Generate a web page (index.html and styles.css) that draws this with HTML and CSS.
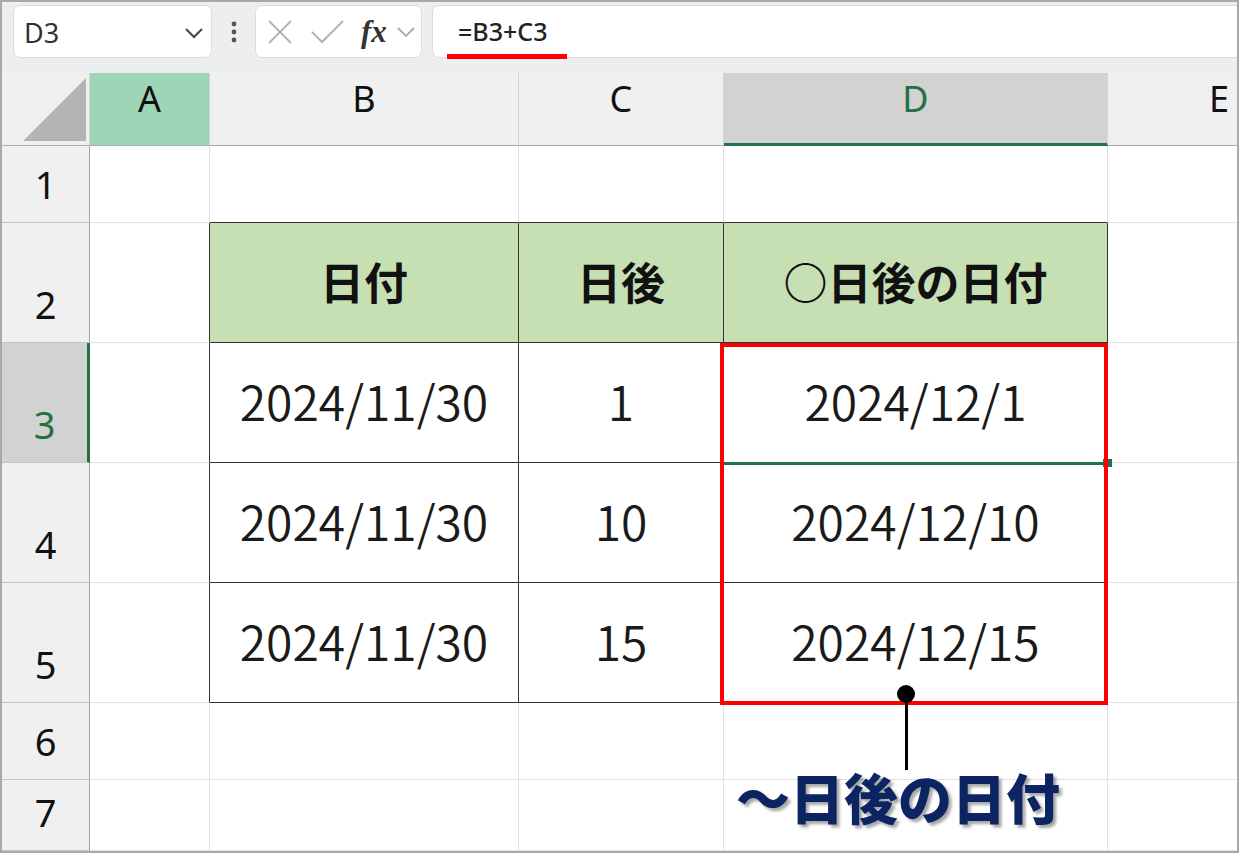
FILE: index.html
```html
<!DOCTYPE html>
<html lang="ja">
<head>
  <meta charset="UTF-8" />
  <meta name="viewport" content="width=device-width, initial-scale=1.0"/>
  <title>日後の日付</title>
  <link rel="stylesheet" href="styles.css">
</head>
<body>

<div class="frame">
  <div class="toolbar">
    <div class="namebox">
      <span class="cellref">D3</span>
      <svg class="chev" width="20" height="12" viewBox="0 0 20 12"><path d="M2 2 L10 10 L18 2" fill="none" stroke="#444" stroke-width="2"/></svg>
    </div>
    <div class="grip">
      <svg width="6" height="22" viewBox="0 0 6 22"><circle cx="3" cy="3" r="2.4" fill="#555"/><circle cx="3" cy="11" r="2.4" fill="#555"/><circle cx="3" cy="19" r="2.4" fill="#555"/></svg>
    </div>
    <div class="fxbox">
      <svg class="ico-x" width="26" height="24" viewBox="0 0 26 24"><path d="M2 1 L24 23 M24 1 L2 23" stroke="#b4b4b4" stroke-width="2"/></svg>
      <svg class="ico-ok" width="33" height="24" viewBox="0 0 33 24"><path d="M1 12 L11 22 L32 1" fill="none" stroke="#b4b4b4" stroke-width="2"/></svg>
      <span class="fx">fx</span>
      <svg class="chev-sm" width="20" height="12" viewBox="0 0 20 12"><path d="M2 2 L10 10 L18 2" fill="none" stroke="#aaa" stroke-width="1.8"/></svg>
    </div>
    <div class="formula">
      <span class="formula-text">=B3+C3</span>
      <span class="mark"></span>
    </div>
  </div>

  <div class="sheet">
    <!-- column headers -->
    <div class="ch corner">
      <svg width="88" height="73" viewBox="0 0 88 73"><polygon points="21,68 84,68 84,5" fill="#b4b4b4"/></svg>
    </div>
    <div class="ch ch-a">A</div>
    <div class="ch">B</div>
    <div class="ch">C</div>
    <div class="ch ch-sel">D</div>
    <div class="ch ch-e">E</div>

    <!-- row 1 -->
    <div class="rh">1</div>
    <div class="c"></div>
    <div class="c above"></div>
    <div class="c above"></div>
    <div class="c above"></div>
    <div class="c"></div>

    <!-- row 2 -->
    <div class="rh">2</div>
    <div class="c before"></div>
    <div class="c tb th">日付</div>
    <div class="c tb th">日後</div>
    <div class="c tb th">○日後の日付</div>
    <div class="c"></div>

    <!-- row 3 -->
    <div class="rh rh-sel">3</div>
    <div class="c before"></div>
    <div class="c tb td">2024/11/30</div>
    <div class="c tb td">1</div>
    <div class="c tb td">2024/12/1</div>
    <div class="c"></div>

    <!-- row 4 -->
    <div class="rh">4</div>
    <div class="c before"></div>
    <div class="c tb td">2024/11/30</div>
    <div class="c tb td">10</div>
    <div class="c tb td">2024/12/10</div>
    <div class="c"></div>

    <!-- row 5 -->
    <div class="rh">5</div>
    <div class="c before"></div>
    <div class="c tb td">2024/11/30</div>
    <div class="c tb td">15</div>
    <div class="c tb td">2024/12/15</div>
    <div class="c"></div>

    <!-- row 6 -->
    <div class="rh">6</div>
    <div class="c"></div>
    <div class="c"></div>
    <div class="c"></div>
    <div class="c"></div>
    <div class="c"></div>

    <!-- row 7 -->
    <div class="rh">7</div>
    <div class="c"></div>
    <div class="c"></div>
    <div class="c"></div>
    <div class="c"></div>
    <div class="c"></div>

    <!-- overlays -->
    <div class="sel-line"></div>
    <div class="sel-handle"></div>
    <div class="red-box"></div>
    <div class="pin-dot"></div>
    <div class="pin-line"></div>
    <div class="callout">～日後の日付</div>
  </div>
</div>

</body>
</html>
```

FILE: styles.css
```css
body {
  margin: 0;
  padding: 0;
  background: #fff;
  font-family: "Noto Sans", "Noto Sans CJK JP", sans-serif;
}

.frame {
  width: 1239px;
  height: 853px;
  box-sizing: border-box;
  border: 2px solid #a9a9a9;
  overflow: hidden;
  background: #fff;
}

/* formula bar */
.toolbar {
  height: 71px;
  background: #edeef0;
  display: flex;
  align-items: flex-start;
  padding-top: 3px;
  box-sizing: border-box;
}

.namebox {
  margin-left: 11px;
  width: 199px;
  height: 53px;
  box-sizing: border-box;
  background: #fff;
  border: 1px solid #dcdcdc;
  border-radius: 7px;
  display: flex;
  align-items: center;
  justify-content: space-between;
  padding: 2px 7px 0 10px;
}

.cellref {
  font-size: 27px;
  color: #333;
  line-height: 1;
}

.grip {
  width: 43px;
  height: 53px;
  display: flex;
  align-items: center;
  justify-content: center;
}

.fxbox {
  width: 167px;
  height: 53px;
  box-sizing: border-box;
  background: #fff;
  border: 1px solid #dcdcdc;
  border-radius: 7px;
  display: flex;
  align-items: center;
  padding-left: 11px;
}

.ico-ok {
  margin-left: 18px;
}

.fx {
  margin-left: 17px;
  font-family: "Liberation Serif", serif;
  font-style: italic;
  font-weight: bold;
  font-size: 31px;
  color: #333;
  line-height: 1;
}

.chev-sm {
  margin-left: 9px;
}

.formula {
  position: relative;
  flex: 1;
  margin-left: 10px;
  height: 53px;
  box-sizing: border-box;
  background: #fff;
  border: 1px solid #dcdcdc;
  border-right: none;
  border-radius: 7px 0 0 7px;
  display: flex;
  align-items: center;
  padding-left: 25px;
}

.formula-text {
  font-size: 25px;
  font-weight: 500;
  color: #222;
  line-height: 1;
}

.formula .mark {
  position: absolute;
  left: 14px;
  top: 48px;
  width: 120px;
  height: 5px;
  background: #ff0000;
}

/* sheet grid */
.sheet {
  position: relative;
  display: grid;
  grid-template-columns: 88px 120px 309px 205px 384px 222px;
  grid-template-rows: 73px 77px 120px 120px 120px 120px 77px 71px;
}

.sheet > div {
  box-sizing: border-box;
}

.ch {
  background: #f0f0f0;
  border-right: 1px solid #d4d4d4;
  border-bottom: 1px solid #ababab;
  display: flex;
  justify-content: center;
  align-items: flex-start;
  padding-top: 8px;
  font-size: 36px;
  line-height: 1;
  color: #111;
}

.corner {
  padding: 0;
  display: block;
}

.corner svg {
  display: block;
}

.ch-a {
  background: #9fd5b7;
}

.ch-sel {
  background: #d2d2d2;
  color: #217346;
  border-bottom: 3px solid #217346;
}

.ch-e {
  border-right: none;
}

.rh {
  background: #f0f0f0;
  border-right: 1px solid #a5a5a5;
  border-bottom: 1px solid #c5c5c5;
  display: flex;
  justify-content: center;
  align-items: flex-end;
  padding-bottom: 19px;
  font-size: 38px;
  line-height: 1;
  color: #111;
}

.rh-sel {
  background: #d2d2d2;
  color: #217346;
  border-right: 3px solid #217346;
}

.c {
  border-right: 1px solid #e1e1e1;
  border-bottom: 1px solid #e1e1e1;
  display: flex;
  align-items: center;
  justify-content: center;
  font-family: "Noto Sans CJK JP", sans-serif;
  color: #111;
}

.c.above {
  border-bottom-color: #333;
}

.c.before {
  border-right-color: #333;
}

.c.tb {
  border-right-color: #333;
  border-bottom-color: #333;
}

.th {
  background: #c6e0b4;
  font-size: 44px;
  font-weight: bold;
  padding-bottom: 4px;
}

.td {
  font-size: 48px;
  font-weight: 350;
  color: #1a1a1a;
  padding-bottom: 6px;
}

/* overlays */
.sel-line {
  position: absolute;
  left: 722px;
  top: 389px;
  width: 381px;
  height: 3px;
  background: #217346;
}

.sel-handle {
  position: absolute;
  left: 1101px;
  top: 386px;
  width: 9px;
  height: 8px;
  background: #217346;
}

.red-box {
  position: absolute;
  left: 718px;
  top: 270px;
  width: 388px;
  height: 362px;
  box-sizing: border-box;
  border: 4px solid #ff0000;
}

.pin-dot {
  position: absolute;
  left: 895px;
  top: 612px;
  width: 18px;
  height: 18px;
  border-radius: 50%;
  background: #000;
}

.pin-line {
  position: absolute;
  left: 903px;
  top: 621px;
  width: 3px;
  height: 76px;
  background: #000;
}

.callout {
  position: absolute;
  left: 734px;
  top: 697px;
  font-family: "Noto Sans CJK JP", sans-serif;
  font-size: 54px;
  font-weight: 900;
  line-height: 1;
  color: #0c2461;
  white-space: nowrap;
  text-shadow: 3px 3px 3px rgba(0, 0, 0, 0.35);
}
```
